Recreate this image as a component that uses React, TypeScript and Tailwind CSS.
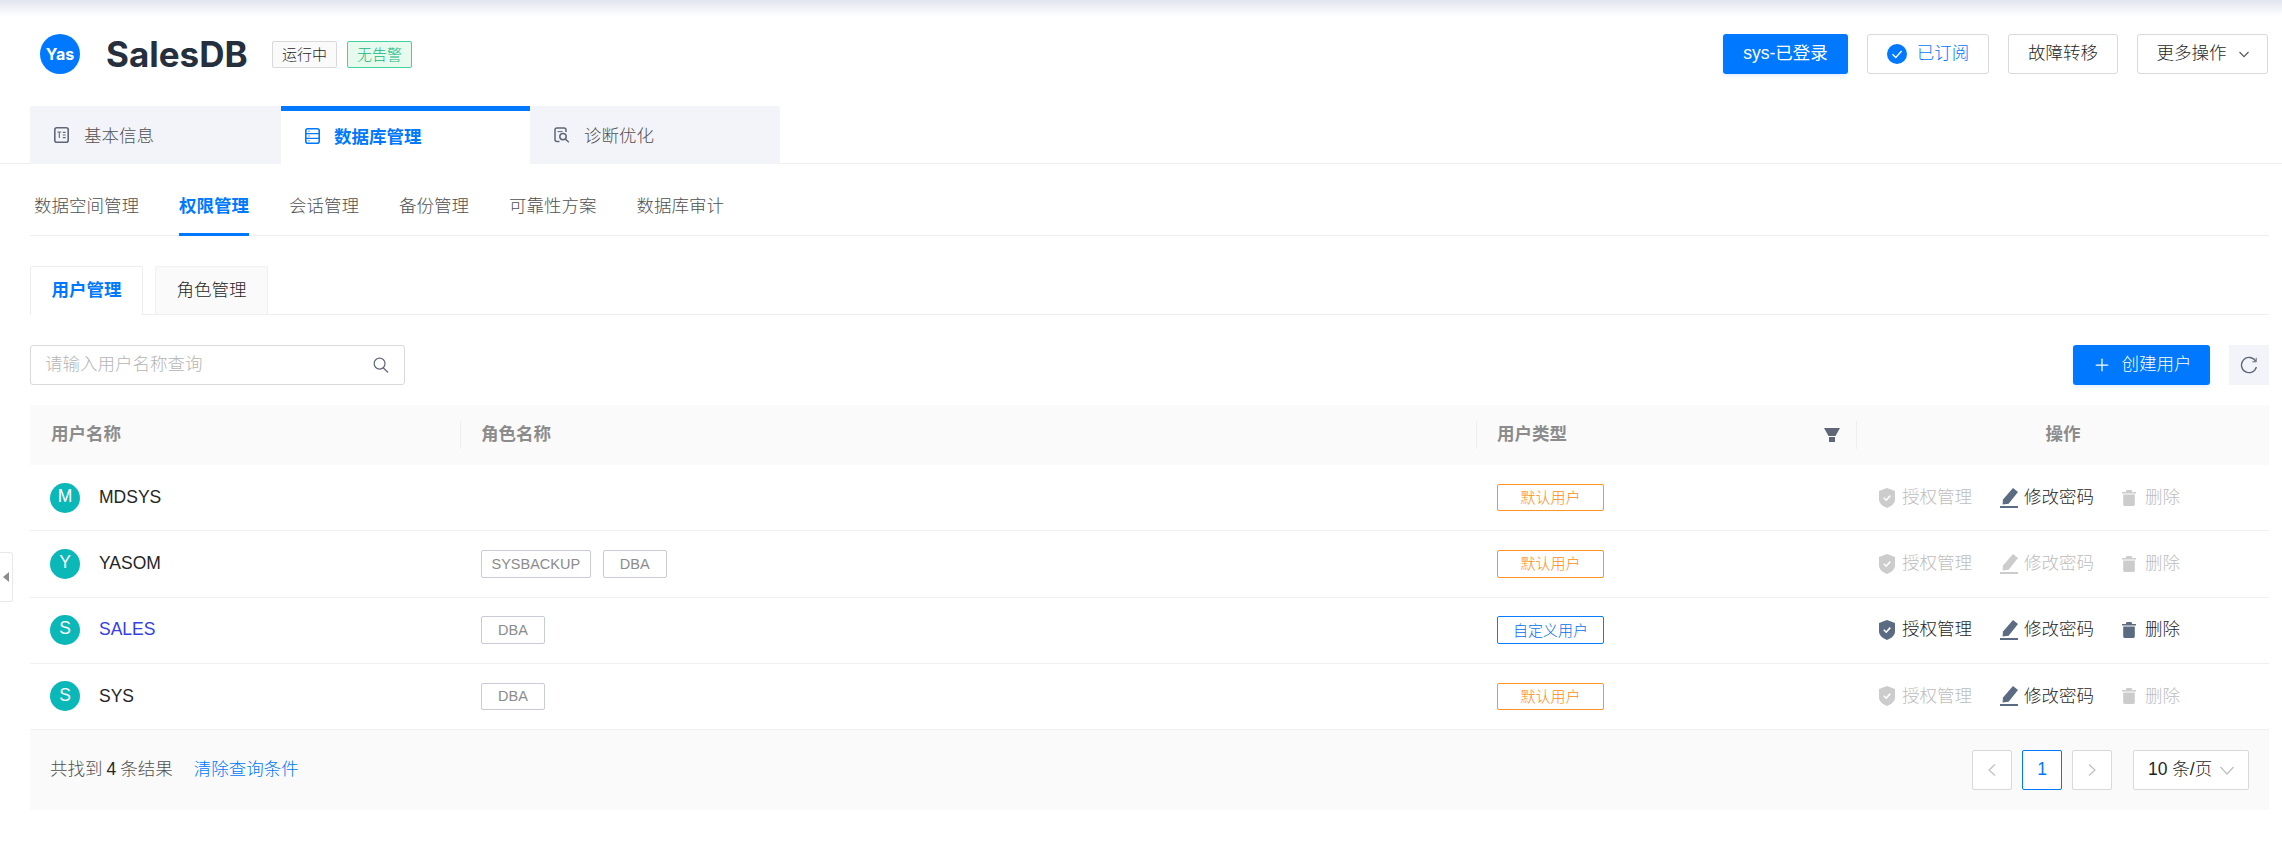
import { Plus } from "lucide-react";

const rowGrid = "grid grid-cols-[430px_1016px_380px_413px]";

const users = [
  { name: "MDSYS", roles: [] as string[], custom: false, grant: false, pwd: true, del: false },
  { name: "YASOM", roles: ["SYSBACKUP", "DBA"], custom: false, grant: false, pwd: false, del: false },
  { name: "SALES", roles: ["DBA"], custom: true, grant: true, pwd: true, del: true },
  { name: "SYS", roles: ["DBA"], custom: false, grant: false, pwd: true, del: false },
];

function ShieldIcon({ on }: { on: boolean }) {
  return (
    <svg width="16" height="20" viewBox="0 0 16 20" className={on ? "text-[#5b6b82]" : "text-[#cccccc]"}>
      <path fill="currentColor" d="M8 0 16 3V11.5C16 15.5 12 18.5 8 20 4 18.5 0 15.5 0 11.5V3Z" />
      <path fill="none" stroke="#fff" strokeWidth="1.6" d="M4.8 9.8 7.2 12.2 11.3 7.6" />
    </svg>
  );
}

function PencilIcon({ on }: { on: boolean }) {
  return (
    <svg width="18" height="20" viewBox="0 0 18 20" className={on ? "text-[#5b6b82]" : "text-[#cccccc]"}>
      <path fill="currentColor" d="M13 0 18 4 8.6 15.8 2.6 16.6 3 11.6Z" />
      <rect x="0" y="18" width="18" height="2" fill="currentColor" />
    </svg>
  );
}

function TrashIcon({ on }: { on: boolean }) {
  return (
    <svg width="14" height="16" viewBox="0 0 14 16" className={on ? "text-[#5b6b82]" : "text-[#cccccc]"}>
      <path fill="currentColor" d="M4.5 0H9.5L10.2 2H14V3.6H0V2H3.8Z" />
      <path fill="currentColor" d="M1.2 4.6H12.8V14.6C12.8 15.4 12.2 16 11.4 16H2.6C1.8 16 1.2 15.4 1.2 14.6Z" />
    </svg>
  );
}

function Action({ on, icon, label, className }: { on: boolean; icon: React.ReactNode; label: string; className: string }) {
  return (
    <div className={"flex items-center " + className}>
      {icon}
      <span className={on ? "text-[#1f1f1f]" : "text-[#bdbdbd]"}>{label}</span>
    </div>
  );
}

function UserRow({ user }: { user: (typeof users)[number] }) {
  return (
    <div className={rowGrid + " h-[66.25px] items-center border-b border-[#f0f0f0]"}>
      <div className="flex items-center pl-5">
        <div className="flex h-[30px] w-[30px] items-center justify-center rounded-full bg-[#0ab8b8] pb-0.5 text-[17.5px] text-white">
          {user.name[0]}
        </div>
        <span className={"ml-[19px] " + (user.custom ? "text-[#3340e6]" : "text-[#262626]")}>{user.name}</span>
      </div>
      <div className="flex gap-3 pl-[21px]">
        {user.roles.map((role) => (
          <span
            key={role}
            className="flex h-[27.5px] min-w-16 items-center justify-center rounded-[2px] border border-[#c9cbd6] px-[9.5px] text-[14.5px] text-[#8c8c8c]"
          >
            {role}
          </span>
        ))}
      </div>
      <div className="pl-[21px]">
        <span
          className={
            "flex h-[27.5px] w-[107px] items-center justify-center rounded-[2px] border text-[15px] " +
            (user.custom ? "border-[#0a7cff] text-[#0070f0]" : "border-[#ff9326] text-[#ff8a14]")
          }
        >
          {user.custom ? "自定义用户" : "默认用户"}
        </span>
      </div>
      <div className="flex items-center pl-[23px]">
        <Action on={user.grant} icon={<ShieldIcon on={user.grant} />} label="授权管理" className="w-[121px] gap-[7px]" />
        <Action on={user.pwd} icon={<PencilIcon on={user.pwd} />} label="修改密码" className="w-[122px] gap-1.5" />
        <Action on={user.del} icon={<TrashIcon on={user.del} />} label="删除" className="gap-[9px]" />
      </div>
    </div>
  );
}

export default function App() {
  return (
    <div className="relative h-[847px] w-[2282px] overflow-hidden bg-white font-['Liberation_Sans','Noto_Sans_CJK_SC',sans-serif] text-[17.5px] font-light leading-none text-[#505050]">
      <div className="h-4 bg-gradient-to-b from-[#e2e4ef] to-white" />

      {/* header */}
      <div className="mt-[18px] flex h-10 items-center justify-between pl-10 pr-[14px]">
        <div className="flex items-center">
          <div className="flex h-10 w-10 items-center justify-center rounded-full bg-[#0078ff] font-['Inter',sans-serif] text-[16px] font-bold text-white">
            Yas
          </div>
          <h1 className="ml-[26px] w-[141px] whitespace-nowrap font-['Inter',sans-serif] text-[35px] font-bold text-[#252f3d]">SalesDB</h1>
          <span className="ml-[25px] flex h-[27px] w-[65px] items-center justify-center rounded-[2px] border border-[#d9d9d9] bg-[#fafafa] text-[15px] text-[#1f1f1f]">
            运行中
          </span>
          <span className="ml-2.5 flex h-[27px] w-[65px] items-center justify-center rounded-[2px] border border-[#40d39f] bg-[#e6fbee] text-[15px] text-[#12b67c]">
            无告警
          </span>
        </div>
        <div className="flex items-center">
          <button className="h-10 w-[125px] rounded-[3px] bg-[#0078ff] font-normal text-white shadow-[0_2px_4px_rgba(0,120,255,0.12)]">sys-已登录</button>
          <button className="ml-[19px] flex h-10 w-[122px] items-center justify-center gap-[10px] rounded-[3px] border border-[#d9d9d9] text-[#0078ff]">
            <svg width="20" height="20" viewBox="0 0 20 20">
              <circle cx="10" cy="10" r="10" fill="#0078ff" />
              <path d="M5.5 10.2 8.8 13.4 14.6 7" fill="none" stroke="#fff" strokeWidth="1.4" />
            </svg>
            已订阅
          </button>
          <button className="ml-[19px] h-10 w-[110px] rounded-[3px] border border-[#d9d9d9] text-[#1f1f1f]">故障转移</button>
          <button className="ml-[19px] flex h-10 w-[131px] items-center justify-center gap-3 rounded-[3px] border border-[#d9d9d9] text-[#1f1f1f]">
            更多操作
            <svg width="10" height="7" viewBox="0 0 10 7" fill="none" stroke="#595959" strokeWidth="1.2">
              <path d="M0.5 1 5 5.6 9.5 1" />
            </svg>
          </button>
        </div>
      </div>

      {/* main tabs */}
      <div className="mt-8 flex h-[58px] border-b border-[#eeeeee] pl-[30px]">
        <div className="flex h-[58px] w-[251px] items-center gap-[15px] rounded-t-[2px] bg-[#f3f4f9] pl-6 pt-[3px]">
          <svg width="15" height="16" viewBox="0 0 15 16" fill="none" stroke="#5f6676" strokeWidth="1.6" className="-mt-[3px]">
            <rect x="0.8" y="0.8" width="13.4" height="14.4" rx="2" />
            <path d="M3.4 5H7.2M5.3 5V11M8.8 5.4H11.6M8.8 8H11.6M8.8 10.6H11.6" strokeWidth="1.1" />
          </svg>
          基本信息
        </div>
        <div className="flex h-[58px] w-[249px] items-center gap-[14px] border-t-[5px] border-[#0078ff] bg-white pl-6 font-bold text-[#0078ff]">
          <svg width="15" height="16" viewBox="0 0 15 16" fill="none" stroke="#0078ff" strokeWidth="1.6" className="-mt-[3px]">
            <rect x="0.8" y="0.8" width="13.4" height="14.4" rx="2" />
            <path d="M0.8 5.6H14.2M0.8 10.4H14.2" strokeWidth="1.2" />
            <path d="M3 3.2H5.2M3 8H5.2M3 12.8H5.2" stroke="#6aa8f0" strokeWidth="1" />
          </svg>
          数据库管理
        </div>
        <div className="flex h-[58px] w-[250px] items-center gap-[14px] rounded-t-[2px] bg-[#f3f4f9] pl-6 pt-[3px]">
          <svg width="16" height="16" viewBox="0 0 16 16" fill="none" stroke="#5f6676" strokeWidth="1.5" className="-mt-[3px]">
            <path d="M5.5 14.6H3A2 2 0 0 1 1 12.6V3A2 2 0 0 1 3 1H10A2 2 0 0 1 12 3V5" />
            <circle cx="9" cy="9.6" r="3.2" />
            <path d="M11.4 12 14.8 15.2" />
            <path d="M3.6 4.6H8.6" strokeWidth="1" />
          </svg>
          诊断优化
        </div>
      </div>

      <div className="pl-[30px] pr-[13px]">
        {/* sub nav */}
        <div className="flex h-[72px] gap-10 border-b border-[#eeeeee] pl-1">
          {["数据空间管理", "权限管理", "会话管理", "备份管理", "可靠性方案", "数据库审计"].map((item) => (
            <div
              key={item}
              className={
                "flex h-[72px] items-center pt-[17px] " +
                (item === "权限管理" ? "border-b-[3px] border-[#0078ff] font-bold text-[#0078ff]" : "pb-[3px]")
              }
            >
              {item}
            </div>
          ))}
        </div>

        {/* user / role tabs */}
        <div className="mt-[30px] flex h-[49px] gap-3 border-b border-[#eeeeee]">
          <div className="flex h-[49px] w-[113px] items-center justify-center rounded-t-[2px] border border-b-0 border-[#eeeeee] bg-white font-bold text-[#0078ff]">
            用户管理
          </div>
          <div className="flex h-12 w-[113px] items-center justify-center rounded-t-[2px] border border-b-0 border-[#f0f0f0] bg-[#fafafa] text-[#1f1f1f]">
            角色管理
          </div>
        </div>

        {/* toolbar */}
        <div className="mt-[30px] flex items-center justify-between">
          <div className="flex h-10 w-[375px] items-center justify-between rounded-[3px] border border-[#d9d9d9] pl-[14px] pr-[15px]">
            <span className="text-[#b5b5b5]">请输入用户名称查询</span>
            <svg width="16" height="16" viewBox="0 0 17 17" fill="none" stroke="#5f6676" strokeWidth="1.3">
              <circle cx="7" cy="7" r="5.8" />
              <path d="M10.8 11.4 16 16.4" />
            </svg>
          </div>
          <div className="flex items-center gap-[19px]">
            <button className="flex h-10 w-[137px] items-center justify-center gap-2.5 rounded-[3px] bg-[#0078ff] text-white shadow-[0_2px_4px_rgba(0,120,255,0.12)]">
              <Plus size={20} strokeWidth={1.5} />
              创建用户
            </button>
            <button className="flex h-10 w-10 items-center justify-center bg-[#f3f4f9]">
              <svg width="18" height="18" viewBox="0 0 18 18" fill="none" stroke="#5f6676" strokeWidth="1.3">
                <path d="M15.6 5.2A7.6 7.6 0 1 0 16.4 11" />
                <path d="M16.2 1.8V5.8H12.4" strokeWidth="1" />
              </svg>
            </button>
          </div>
        </div>

        {/* table */}
        <div className="mt-5">
          <div className={rowGrid + " h-[60px] items-center bg-[#fafafa] font-bold text-[#8c8c8c]"}>
            <div className="pl-[21px]">用户名称</div>
            <div className="flex h-7 items-center border-l border-[#eeeeee] pl-5">角色名称</div>
            <div className="flex h-7 items-center justify-between border-l border-[#eeeeee] pl-5 pr-4">
              用户类型
              <svg width="16" height="14" viewBox="0 0 16 14" fill="#5f6676">
                <path d="M0 0H16L11.5 8H4.5Z" />
                <rect x="5" y="9" width="6" height="5" />
              </svg>
            </div>
            <div className="flex h-7 items-center justify-center border-l border-[#eeeeee]">操作</div>
          </div>

          {users.map((user) => (
            <UserRow key={user.name} user={user} />
          ))}

          <div className="flex h-20 items-center justify-between bg-[#fafafa] pl-5 pr-5">
            <div className="flex items-center">
              <span>
                共找到<span className="mx-1 text-[#262626]">4</span>条结果
              </span>
              <span className="ml-[21px] text-[#0078ff]">清除查询条件</span>
            </div>
            <div className="flex items-center">
              <div className="flex h-10 w-10 items-center justify-center rounded-[2px] border border-[#d9d9d9] bg-white">
                <svg width="8" height="12" viewBox="0 0 8 12" fill="none" stroke="#bfbfbf" strokeWidth="1.2">
                  <path d="M7 0.5 1 6 7 11.5" />
                </svg>
              </div>
              <div className="ml-2.5 flex h-10 w-10 items-center justify-center rounded-[2px] border border-[#0078ff] bg-white text-[#0078ff]">1</div>
              <div className="ml-2.5 flex h-10 w-10 items-center justify-center rounded-[2px] border border-[#d9d9d9] bg-white">
                <svg width="8" height="12" viewBox="0 0 8 12" fill="none" stroke="#bfbfbf" strokeWidth="1.2">
                  <path d="M1 0.5 7 6 1 11.5" />
                </svg>
              </div>
              <div className="ml-[21px] flex h-10 w-[116px] items-center justify-between rounded-[2px] border border-[#d9d9d9] bg-white pl-[14px] pr-[14px] text-[#1f1f1f]">
                10 条/页
                <svg width="14" height="9" viewBox="0 0 14 9" fill="none" stroke="#bfbfbf" strokeWidth="1.2">
                  <path d="M0.5 1 7 8 13.5 1" />
                </svg>
              </div>
            </div>
          </div>
        </div>
      </div>

      {/* sidebar collapse handle */}
      <div className="absolute left-0 top-[552px] flex h-[50px] w-[13px] items-center justify-center rounded-r-[3px] border border-l-0 border-[#e8e8e8] bg-white">
        <div className="h-0 w-0 border-y-[5px] border-r-[6px] border-y-transparent border-r-[#8c8c8c]" />
      </div>
    </div>
  );
}
